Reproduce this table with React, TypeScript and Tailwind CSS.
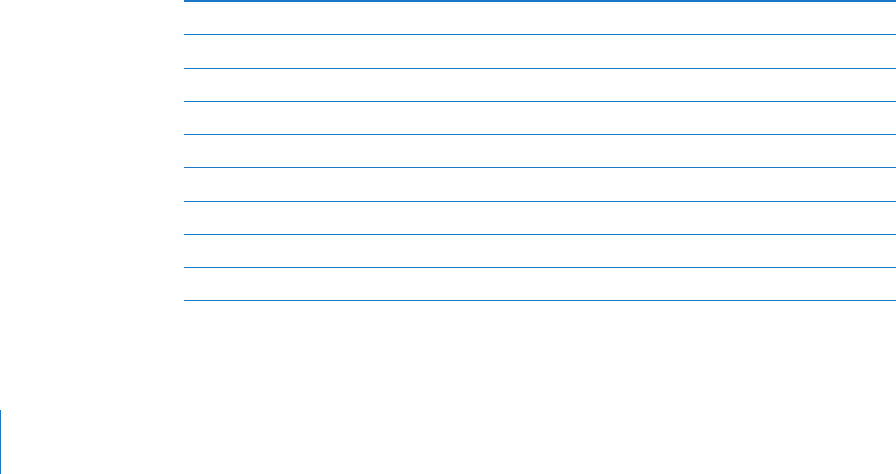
const rowHeights = [32, 33, 32, 32, 32, 33, 32, 32, 32];

export default function App() {
  return (
    <div className="w-[896px] h-[474px] bg-white overflow-hidden flex flex-col">
      {/* Empty ruled table */}
      <div className="ml-[184px] border-t-2 border-[#1a78c8]">
        {rowHeights.map((h, i) => (
          <div
            key={i}
            className="border-b border-[#1a78c8]"
            style={{ height: h + 1 }}
          />
        ))}
      </div>

      {/* Margin bar */}
      <div className="mt-[109px] w-px flex-1 bg-[#1a78c8]" />
    </div>
  );
}
